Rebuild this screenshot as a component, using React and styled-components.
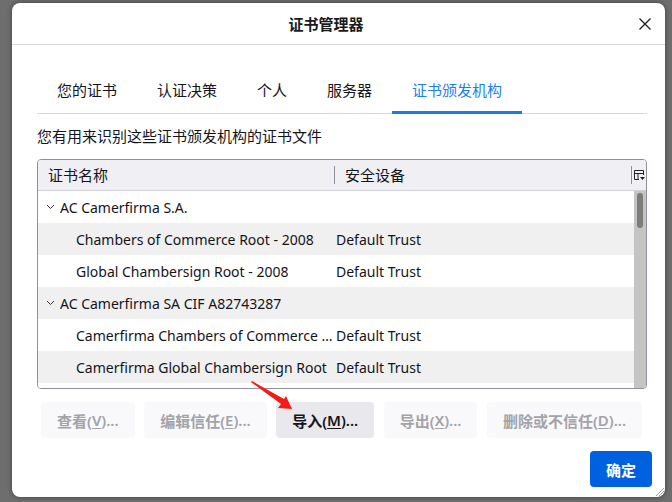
import React from 'react'
import styled, { createGlobalStyle } from 'styled-components'

const GlobalStyle = createGlobalStyle`
  html, body {
    margin: 0;
    padding: 0;
    background: #6e6e6e;
  }
  body {
    font-family: "Noto Sans", "Noto Sans CJK SC", sans-serif;
    color: #15141a;
  }
`

const Screen = styled.div`
  position: relative;
  width: 672px;
  height: 502px;
  box-sizing: border-box;
  padding: 3px 7px 5px 12px;
  display: flex;
  background: #6e6e6e;
`

const Dialog = styled.div`
  position: relative;
  flex: 1;
  display: flex;
  flex-direction: column;
  background: #fff;
  border-radius: 8px;
  box-shadow: 0 0 5px rgba(0, 0, 0, 0.45);
  overflow: hidden;
`

const TitleBar = styled.div`
  height: 41px;
  display: flex;
  align-items: center;
  border-bottom: 1px solid #d8d8d8;
`

const Title = styled.div`
  flex: 1;
  text-align: center;
  padding-left: 15px;
  font-size: 15px;
  font-weight: 700;
  color: #1a1a1a;
`

const CloseButton = styled.div`
  width: 40px;
  height: 41px;
  display: flex;
  align-items: center;
  justify-content: center;
`

const Body = styled.div`
  padding: 0 18px 0 25px;
  display: flex;
  flex-direction: column;
`

const TabBar = styled.div`
  margin-top: 29px;
  display: flex;
  border-bottom: 1px solid #d8d8d8;
`

const Tab = styled.div`
  height: 40px;
  box-sizing: border-box;
  padding: 0 20px 6px;
  margin-bottom: -1px;
  display: flex;
  align-items: center;
  font-size: 15px;
  color: ${p => (p.$active ? '#1f7fe8' : '#15141a')};
  border-bottom: 3px solid ${p => (p.$active ? '#1a7be6' : 'transparent')};
`

const Description = styled.div`
  margin-top: 12px;
  font-size: 15px;
  line-height: 20px;
`

const TableBox = styled.div`
  margin-top: 13px;
  height: 230px;
  box-sizing: border-box;
  border: 1px solid #8f8f9d;
  border-radius: 4px;
  overflow: hidden;
  display: flex;
  flex-direction: column;
`

const Header = styled.div`
  height: 30px;
  flex-shrink: 0;
  display: grid;
  grid-template-columns: 296px 1fr 15px;
  align-items: center;
  background: #f0f0f4;
  border-bottom: 1px solid #d0d0d7;
`

const HeaderCell = styled.div`
  height: 18px;
  display: flex;
  align-items: center;
  padding-left: ${p => p.$pad}px;
  font-size: 15px;
  line-height: 18px;
  border-left: ${p => (p.$sep ? '1px solid #8f8f9d' : 'none')};
`

const Rows = styled.div`
  flex: 1;
  display: flex;
  min-height: 0;
`

const RowList = styled.div`
  flex: 1;
  overflow: hidden;
  background: #fff;
`

const Row = styled.div`
  height: 32px;
  display: grid;
  grid-template-columns: 296px 1fr;
  align-items: center;
  background: ${p => (p.$alt ? '#f0f0f0' : '#fff')};
  font-size: 14px;
  line-height: 19px;
`

const NameCell = styled.div`
  display: flex;
  align-items: center;
  gap: 5px;
  padding-left: ${p => (p.$child ? 38 : 8)}px;
  white-space: nowrap;
  overflow: hidden;
`

const NameText = styled.span`
  overflow: hidden;
  text-overflow: ellipsis;
`

const DeviceCell = styled.div`
  padding-left: 2px;
  white-space: nowrap;
`

const Track = styled.div`
  width: 12px;
  background: #c4c4c4;
  padding: 2px 0 0 3px;
  box-sizing: border-box;
`

const Thumb = styled.div`
  width: 6px;
  height: 35px;
  border-radius: 3px;
  background: #7c7c7c;
`

const ButtonRow = styled.div`
  margin: 13px 0 0 4px;
  display: flex;
  gap: 9.5px;
`

const Button = styled.div`
  height: 36px;
  padding: 0 16px;
  border-radius: 4px;
  display: flex;
  align-items: center;
  font-size: 15px;
  font-weight: 600;
  white-space: nowrap;
  background: ${p => (p.$disabled ? '#f9f9fb' : '#e9e9ed')};
  color: ${p => (p.$disabled ? '#a3a3a8' : '#15141a')};

  u {
    text-underline-offset: 2px;
  }
`

const Footer = styled.div`
  margin-top: 13px;
  padding-right: 13px;
  display: flex;
  justify-content: flex-end;
`

const PrimaryButton = styled.div`
  width: 62px;
  height: 36px;
  border-radius: 4px;
  background: #0061e0;
  color: #fff;
  font-size: 15px;
  font-weight: 700;
  display: flex;
  align-items: center;
  justify-content: center;
`

const Grip = styled.svg`
  position: absolute;
  right: 0;
  bottom: 0;
`

const Pointer = styled.svg`
  position: absolute;
  left: 248px;
  top: 378px;
`

const Chevron = () => (
  <svg width="9" height="6" viewBox="0 0 9 6">
    <path d="M1 1 L4.5 4.5 L8 1" fill="none" stroke="#333" strokeWidth="1" />
  </svg>
)

const rows = [
  { name: 'AC Camerfirma S.A.', group: true },
  { name: 'Chambers of Commerce Root - 2008', device: 'Default Trust' },
  { name: 'Global Chambersign Root - 2008', device: 'Default Trust' },
  { name: 'AC Camerfirma SA CIF A82743287', group: true },
  { name: 'Camerfirma Chambers of Commerce Root', device: 'Default Trust' },
  { name: 'Camerfirma Global Chambersign Root', device: 'Default Trust' },
]

const tabs = ['您的证书', '认证决策', '个人', '服务器', '证书颁发机构']

export default function App() {
  return (
    <Screen>
      <GlobalStyle />
      <Dialog>
        <TitleBar>
          <Title>证书管理器</Title>
          <CloseButton>
            <svg width="14" height="14" viewBox="0 0 14 14">
              <path d="M1.5 1.5 L12.5 12.5 M12.5 1.5 L1.5 12.5" stroke="#222" strokeWidth="1.4" />
            </svg>
          </CloseButton>
        </TitleBar>
        <Body>
          <TabBar>
            {tabs.map((t, i) => (
              <Tab key={t} $active={i === tabs.length - 1}>{t}</Tab>
            ))}
          </TabBar>
          <Description>您有用来识别这些证书颁发机构的证书文件</Description>
          <TableBox>
            <Header>
              <HeaderCell $pad={10}>证书名称</HeaderCell>
              <HeaderCell $pad={10} $sep>安全设备</HeaderCell>
              <HeaderCell $pad={2} $sep>
                <svg width="11" height="11" viewBox="0 0 11 11">
                  <path d="M0.5 0.5 H9.5 V5 M0.5 0.5 V9.5 H5 M0.5 3.5 H9.5 M4 3.5 V9.5" fill="none" stroke="#222" strokeWidth="1" />
                  <path d="M6 7 H11 L8.5 10 Z" fill="#222" />
                </svg>
              </HeaderCell>
            </Header>
            <Rows>
              <RowList>
                {rows.map((r, i) => (
                  <Row key={r.name} $alt={i % 2 === 1}>
                    <NameCell $child={!r.group}>
                      {r.group && <Chevron />}
                      <NameText>{r.name}</NameText>
                    </NameCell>
                    <DeviceCell>{r.device}</DeviceCell>
                  </Row>
                ))}
              </RowList>
              <Track>
                <Thumb />
              </Track>
            </Rows>
          </TableBox>
          <ButtonRow>
            <Button $disabled>查看(<u>V</u>)...</Button>
            <Button $disabled>编辑信任(<u>E</u>)...</Button>
            <Button>导入(<u>M</u>)...</Button>
            <Button $disabled>导出(<u>X</u>)...</Button>
            <Button $disabled>删除或不信任(<u>D</u>)...</Button>
          </ButtonRow>
        </Body>
        <Footer>
          <PrimaryButton>确定</PrimaryButton>
        </Footer>
        <Grip width="11" height="11" viewBox="0 0 11 11">
          <path d="M10 2 L2 10 M10 5 L5 10 M10 8 L8 10" stroke="#9a9a9a" strokeWidth="1" />
        </Grip>
      </Dialog>
      <Pointer width="48" height="36" viewBox="0 0 48 36">
        <path d="M3 4 L4 3 L36 21 L38 18 L44 31 L30 30 L33 26 Z" fill="#f31a1a" />
      </Pointer>
    </Screen>
  )
}
